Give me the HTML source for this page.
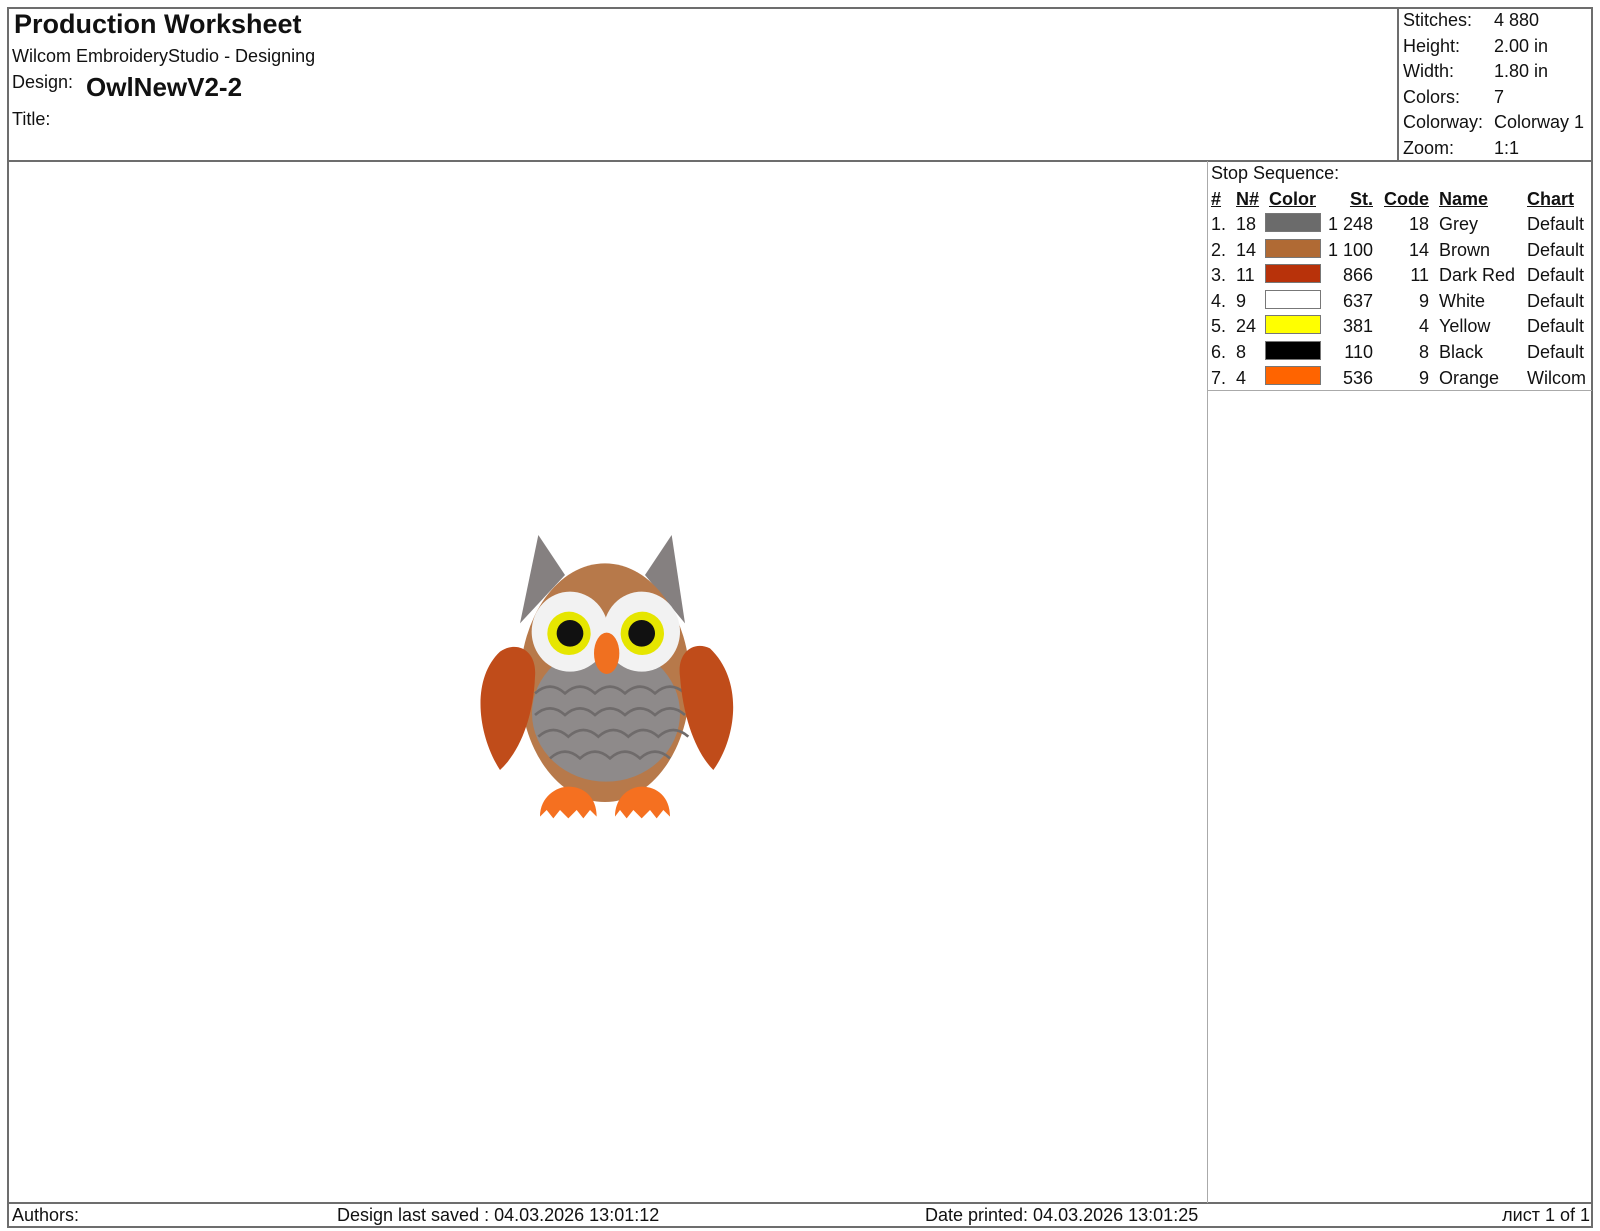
<!DOCTYPE html>
<html><head><meta charset="utf-8"><style>
*{margin:0;padding:0;box-sizing:border-box}
body{width:1600px;height:1231px;background:#fff;position:relative;font-family:"Liberation Sans",Arial,sans-serif;color:#111;overflow:hidden}
.a{position:absolute;white-space:nowrap;line-height:1}
.ln{position:absolute;background:#6d6d6d}
.t{font-size:18px}
.u{text-decoration:underline;font-weight:bold}
.sw{position:absolute;width:56px;height:19px;border:1px solid #777}
.r{text-align:right}
</style></head><body>
<div class="ln" style="left:7px;top:7px;width:1586px;height:2px"></div>
<div class="ln" style="left:7px;top:7px;width:2px;height:1221px"></div>
<div class="ln" style="left:1591px;top:7px;width:2px;height:1221px"></div>
<div class="ln" style="left:7px;top:160px;width:1586px;height:2px"></div>
<div class="ln" style="left:7px;top:1202px;width:1586px;height:2px"></div>
<div class="ln" style="left:7px;top:1226px;width:1586px;height:2px"></div>
<div class="ln" style="left:1397px;top:7px;width:2px;height:154px"></div>
<div class="ln" style="left:1207px;top:161px;width:1px;height:1042px;background:#aaa"></div>
<div class="ln" style="left:1207px;top:390px;width:385px;height:1px;background:#aaa"></div>

<div class="a" style="left:14px;top:11px;font-size:27px;font-weight:bold">Production Worksheet</div>
<div class="a t" style="left:12px;top:47px">Wilcom EmbroideryStudio - Designing</div>
<div class="a t" style="left:12px;top:73px">Design:</div>
<div class="a" style="left:86px;top:74px;font-size:26px;font-weight:bold">OwlNewV2-2</div>
<div class="a t" style="left:12px;top:110px">Title:</div>

<div class="a t" style="left:1403px;top:8px;line-height:25.6px">Stitches:<br>Height:<br>Width:<br>Colors:<br>Colorway:<br>Zoom:</div>
<div class="a t" style="left:1494px;top:8px;line-height:25.6px">4 880<br>2.00 in<br>1.80 in<br>7<br>Colorway 1<br>1:1</div>

<div class="a t" style="left:1211px;top:164px">Stop Sequence:</div>
<div class="a t" style="left:1211px;top:190px"><span class="u">#</span></div>
<div class="a t" style="left:1236px;top:190px"><span class="u">N#</span></div>
<div class="a t" style="left:1269px;top:190px"><span class="u">Color</span></div>
<div class="a t r" style="left:1310px;width:63px;top:190px"><span class="u">St.</span></div>
<div class="a t" style="left:1384px;top:190px"><span class="u">Code</span></div>
<div class="a t" style="left:1439px;top:190px"><span class="u">Name</span></div>
<div class="a t" style="left:1527px;top:190px"><span class="u">Chart</span></div>

<div class="a t" style="left:1211px;top:212px;line-height:25.6px">1.<br>2.<br>3.<br>4.<br>5.<br>6.<br>7.</div>
<div class="a t" style="left:1236px;top:212px;line-height:25.6px">18<br>14<br>11<br>9<br>24<br>8<br>4</div>
<div class="a t r" style="left:1300px;width:73px;top:212px;line-height:25.6px">1 248<br>1 100<br>866<br>637<br>381<br>110<br>536</div>
<div class="a t r" style="left:1390px;width:39px;top:212px;line-height:25.6px">18<br>14<br>11<br>9<br>4<br>8<br>9</div>
<div class="a t" style="left:1439px;top:212px;line-height:25.6px">Grey<br>Brown<br>Dark Red<br>White<br>Yellow<br>Black<br>Orange</div>
<div class="a t" style="left:1527px;top:212px;line-height:25.6px">Default<br>Default<br>Default<br>Default<br>Default<br>Default<br>Wilcom</div>
<div class="sw" style="left:1265px;top:213px;background:#6b6b6b"></div>
<div class="sw" style="left:1265px;top:239px;background:#b06a34"></div>
<div class="sw" style="left:1265px;top:264px;background:#b8320a"></div>
<div class="sw" style="left:1265px;top:290px;background:#fff"></div>
<div class="sw" style="left:1265px;top:315px;background:#ffff00"></div>
<div class="sw" style="left:1265px;top:341px;background:#000"></div>
<div class="sw" style="left:1265px;top:366px;background:#ff6400"></div>

<div class="a t" style="left:12px;top:1206px">Authors:</div>
<div class="a t" style="left:337px;top:1206px">Design last saved : 04.03.2026 13:01:12</div>
<div class="a t" style="left:925px;top:1206px">Date printed: 04.03.2026 13:01:25</div>
<div class="a t r" style="left:1400px;width:190px;top:1206px">лист 1 of 1</div>

<svg style="position:absolute;left:450px;top:520px" width="300" height="310" viewBox="0 0 900 930">
<polygon points="265,45 210,310 345,165" fill="#858080"/>
<polygon points="665,45 705,310 585,165" fill="#858080"/>
<ellipse cx="465" cy="488" rx="255" ry="358" fill="#b7794a"/>
<ellipse cx="468" cy="580" rx="222" ry="205" fill="#8e8a8a"/>
<g fill="none" stroke="#6f6b6b" stroke-width="8">
<path d="M255,520 q45,-40 90,0 q45,-40 90,0 q45,-40 90,0 q45,-40 90,0 q45,-40 90,0"/>
<path d="M255,585 q45,-40 90,0 q45,-40 90,0 q45,-40 90,0 q45,-40 90,0 q45,-40 90,0"/>
<path d="M265,650 q45,-40 90,0 q45,-40 90,0 q45,-40 90,0 q45,-40 90,0 q45,-40 90,0"/>
<path d="M300,715 q45,-40 90,0 q45,-40 90,0 q45,-40 90,0 q45,-40 90,0"/>
</g>
<ellipse cx="360" cy="335" rx="115" ry="120" fill="#f2f2f2"/>
<ellipse cx="575" cy="335" rx="115" ry="120" fill="#f2f2f2"/>
<circle cx="357" cy="340" r="65" fill="#e6e600"/>
<circle cx="577" cy="340" r="65" fill="#e6e600"/>
<circle cx="360" cy="340" r="40" fill="#111"/>
<circle cx="575" cy="340" r="40" fill="#111"/>
<ellipse cx="470" cy="400" rx="38" ry="62" fill="#f07020"/>
<path d="M150,750 C85,650 60,480 150,395 C200,360 262,390 255,470 C250,600 205,700 150,750Z" fill="#c04c1a"/>
<path d="M790,750 C862,650 880,480 780,385 C728,360 680,400 690,470 C700,600 740,700 790,750Z" fill="#c04c1a"/>
<path d="M270,890 C270,830 320,800 355,800 C400,800 440,830 440,890 L420,870 L400,895 L380,870 L355,895 L330,870 L310,895 L290,870Z" fill="#f57020"/>
<path d="M495,890 C495,830 540,800 575,800 C620,800 660,830 660,890 L640,870 L620,895 L600,870 L575,895 L550,870 L530,895 L510,870Z" fill="#f57020"/>
</svg>
</body></html>
